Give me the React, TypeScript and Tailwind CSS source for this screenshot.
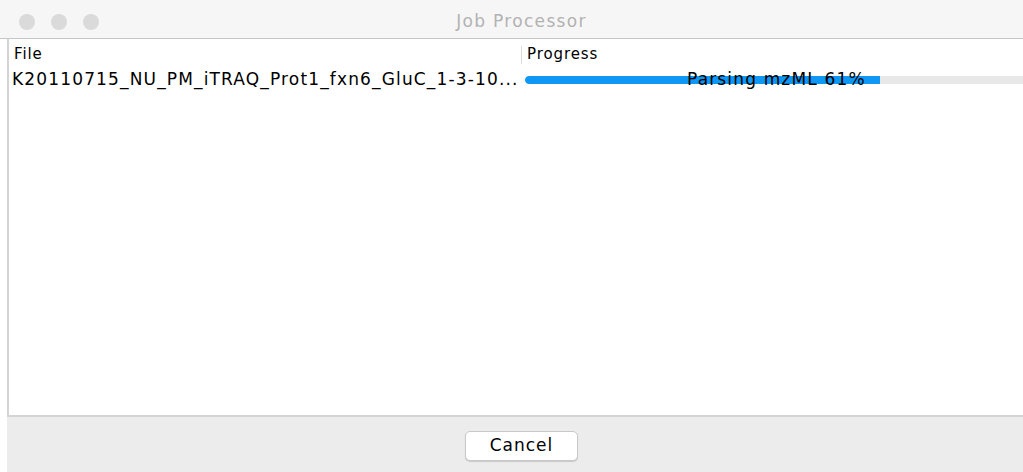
const rows = [
  {
    file: 'K20110715_NU_PM_iTRAQ_Prot1_fxn6_GluC_1-3-10...',
    status: 'Parsing mzML',
    percent: 61,
  },
];

function TrafficLight() {
  return <span className="block w-[16px] h-[16px] rounded-full bg-[#dadada]" />;
}

export default function App() {
  return (
    <div className="w-[1023px] h-[472px] flex flex-col overflow-hidden bg-white font-['DejaVu_Sans',sans-serif]">
      {/* title bar */}
      <div className="relative h-[39px] shrink-0 flex items-center bg-[#f6f6f6] border-b border-[#c6c6c6]">
        <div className="flex gap-[16px] pl-[19px] pt-[6px]">
          <TrafficLight />
          <TrafficLight />
          <TrafficLight />
        </div>
        <span className="absolute left-0 right-0 text-center text-[17px] tracking-[1.3px] text-[#b2b2b2] pt-[5px] pl-[20px]">
          Job Processor
        </span>
      </div>

      <div className="flex-1 flex flex-col pl-[7px]">
        {/* table */}
        <div className="flex-1 border-l-2 border-b-2 border-[#d4d4d4] bg-white">
          <div className="flex h-[26px] items-end text-[15px] tracking-[0.9px] text-black">
            <div className="w-[512px] pl-[5px]">File</div>
            <div className="flex-1 flex items-end">
              <span className="w-px h-[18px] bg-[#dcdcdc] mb-[1px]" />
              <span className="pl-[5px]">Progress</span>
            </div>
          </div>
          {rows.map((r) => (
            <div key={r.file} className="flex h-[29px] items-center text-[17px] tracking-[1.15px] text-black">
              <div className="w-[512px] pl-[3px] whitespace-nowrap overflow-hidden">{r.file}</div>
              <div className="relative flex-1 pl-[4px] flex items-center">
                <div className="relative w-full h-[8px] bg-[#e8e8e8] rounded-l-full overflow-hidden">
                  <div className="h-full w-[355px] bg-[#0f97f4] rounded-l-full" />
                </div>
                <span className="absolute left-[166px] top-1/2 -translate-y-1/2 whitespace-nowrap">
                  {r.status} {r.percent}%
                </span>
              </div>
            </div>
          ))}
        </div>

        {/* footer */}
        <div className="h-[55px] shrink-0 bg-[#ececec] flex items-center justify-center pt-[3px]">
          <button className="ml-[13px] w-[113px] h-[30px] bg-white rounded-[5px] border border-[#c8c8c8] shadow-[0_1px_1px_rgba(0,0,0,0.15)] text-[17px] tracking-[1px] text-black">
            Cancel
          </button>
        </div>
      </div>
    </div>
  );
}
